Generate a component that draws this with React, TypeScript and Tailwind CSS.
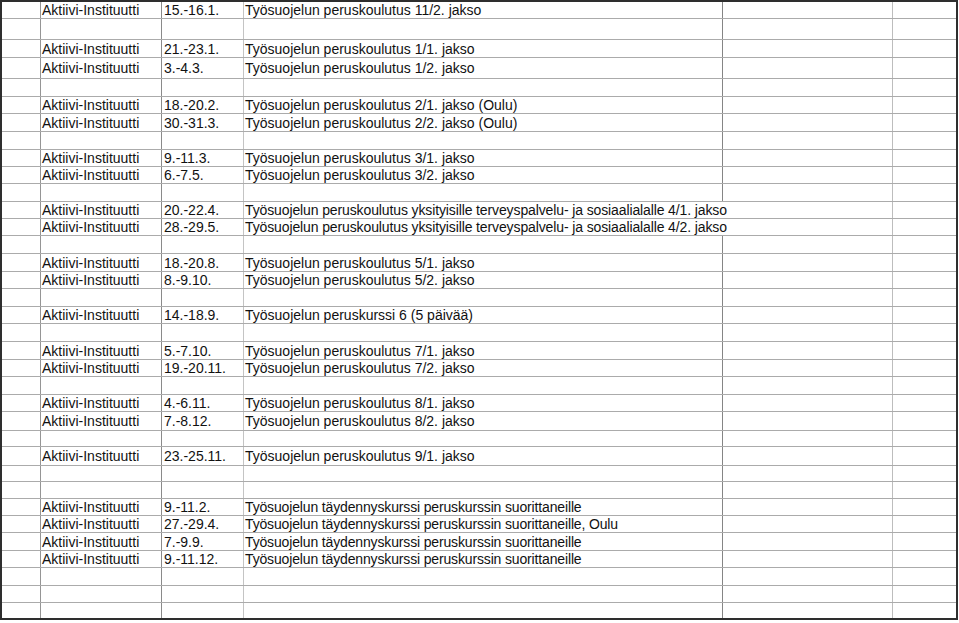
const ORG = "Aktiivi-Instituutti";

type Row = {
  h: string;
  date?: string;
  title?: string;
  wide?: boolean;
  tight?: string;
};

// row heights measured off the sheet; classes written out in full
const rows: Row[] = [
  { h: "h-[17px]", date: "15.-16.1.", title: "Työsuojelun peruskoulutus 11/2. jakso" },
  { h: "h-[21px]" },
  { h: "h-[18px]", date: "21.-23.1.", title: "Työsuojelun peruskoulutus 1/1. jakso" },
  { h: "h-[21px]", date: "3.-4.3.", title: "Työsuojelun peruskoulutus 1/2. jakso" },
  { h: "h-[18px]" },
  { h: "h-[17px]", date: "18.-20.2.", title: "Työsuojelun peruskoulutus 2/1. jakso (Oulu)" },
  { h: "h-[18px]", date: "30.-31.3.", title: "Työsuojelun peruskoulutus 2/2. jakso (Oulu)" },
  { h: "h-[18px]" },
  { h: "h-[17px]", date: "9.-11.3.", title: "Työsuojelun peruskoulutus 3/1. jakso" },
  { h: "h-[17px]", date: "6.-7.5.", title: "Työsuojelun peruskoulutus 3/2. jakso" },
  { h: "h-[18px]" },
  {
    h: "h-[17px]",
    date: "20.-22.4.",
    title: "Työsuojelun peruskoulutus yksityisille terveyspalvelu- ja sosiaalialalle 4/1. jakso",
    wide: true,
    tight: "tracking-[-0.12px]",
  },
  {
    h: "h-[17px]",
    date: "28.-29.5.",
    title: "Työsuojelun peruskoulutus yksityisille terveyspalvelu- ja sosiaalialalle 4/2. jakso",
    wide: true,
    tight: "tracking-[-0.12px]",
  },
  { h: "h-[18px]" },
  { h: "h-[18px]", date: "18.-20.8.", title: "Työsuojelun peruskoulutus 5/1. jakso" },
  { h: "h-[17px]", date: "8.-9.10.", title: "Työsuojelun peruskoulutus 5/2. jakso" },
  { h: "h-[18px]" },
  { h: "h-[17px]", date: "14.-18.9.", title: "Työsuojelun peruskurssi 6 (5 päivää)" },
  { h: "h-[18px]" },
  { h: "h-[18px]", date: "5.-7.10.", title: "Työsuojelun peruskoulutus 7/1. jakso" },
  { h: "h-[17px]", date: "19.-20.11.", title: "Työsuojelun peruskoulutus 7/2. jakso" },
  { h: "h-[18px]" },
  { h: "h-[17px]", date: "4.-6.11.", title: "Työsuojelun peruskoulutus 8/1. jakso" },
  { h: "h-[19px]", date: "7.-8.12.", title: "Työsuojelun peruskoulutus 8/2. jakso" },
  { h: "h-[16px]" },
  { h: "h-[19px]", date: "23.-25.11.", title: "Työsuojelun peruskoulutus 9/1. jakso" },
  { h: "h-[16px]" },
  { h: "h-[17px]" },
  {
    h: "h-[17px]",
    date: "9.-11.2.",
    title: "Työsuojelun täydennyskurssi peruskurssin suorittaneille",
    tight: "tracking-[-0.15px]",
  },
  {
    h: "h-[17px]",
    date: "27.-29.4.",
    title: "Työsuojelun täydennyskurssi peruskurssin suorittaneille, Oulu",
    tight: "tracking-[-0.15px]",
  },
  {
    h: "h-[18px]",
    date: "7.-9.9.",
    title: "Työsuojelun täydennyskurssi peruskurssin suorittaneille",
    tight: "tracking-[-0.15px]",
  },
  {
    h: "h-[17px]",
    date: "9.-11.12.",
    title: "Työsuojelun täydennyskurssi peruskurssin suorittaneille",
    tight: "tracking-[-0.15px]",
  },
  { h: "h-[18px]" },
  { h: "h-[17px]" },
  { h: "h-[15px]" },
];

function Cell({
  className,
  children,
}: {
  className: string;
  children?: React.ReactNode;
}) {
  return (
    <div
      className={`flex h-full shrink-0 items-center overflow-visible whitespace-nowrap border-r ${className}`}
    >
      {children}
    </div>
  );
}

function SheetRow({ row, last }: { row: Row; last: boolean }) {
  const text = !!row.date;
  const tight = row.tight ?? "";
  return (
    <div
      className={`flex ${row.h} ${last ? "" : "border-b border-[#ababab]"}`}
    >
      <Cell className="w-[39px] border-[#959595]" />
      <Cell className="w-[121px] border-[#8a8a8a] pl-[1px]">
        {text && ORG}
      </Cell>
      <Cell className="w-[82px] border-[#c4c4c4] pl-[2px]">
        {row.date}
      </Cell>
      {row.wide ? (
        <Cell className={`w-[649px] border-[#bdbdbd] pl-[1px] ${tight}`}>
          {row.title}
        </Cell>
      ) : (
        <>
          <Cell className={`w-[479px] border-[#858585] pl-[1px] ${tight}`}>
            {row.title}
          </Cell>
          <Cell className="w-[170px] border-[#bdbdbd]" />
        </>
      )}
      <div className="h-full w-[63px] shrink-0" />
    </div>
  );
}

export default function App() {
  return (
    <div className="h-[623px] w-[959px] bg-white font-['Liberation_Sans',Arial,sans-serif] text-[14px] leading-none text-[#111]">
      <div className="flex w-[958px] flex-col border-2 border-[#2e2e2e]">
        {rows.map((row, i) => (
          <SheetRow key={i} row={row} last={i === rows.length - 1} />
        ))}
      </div>
    </div>
  );
}
